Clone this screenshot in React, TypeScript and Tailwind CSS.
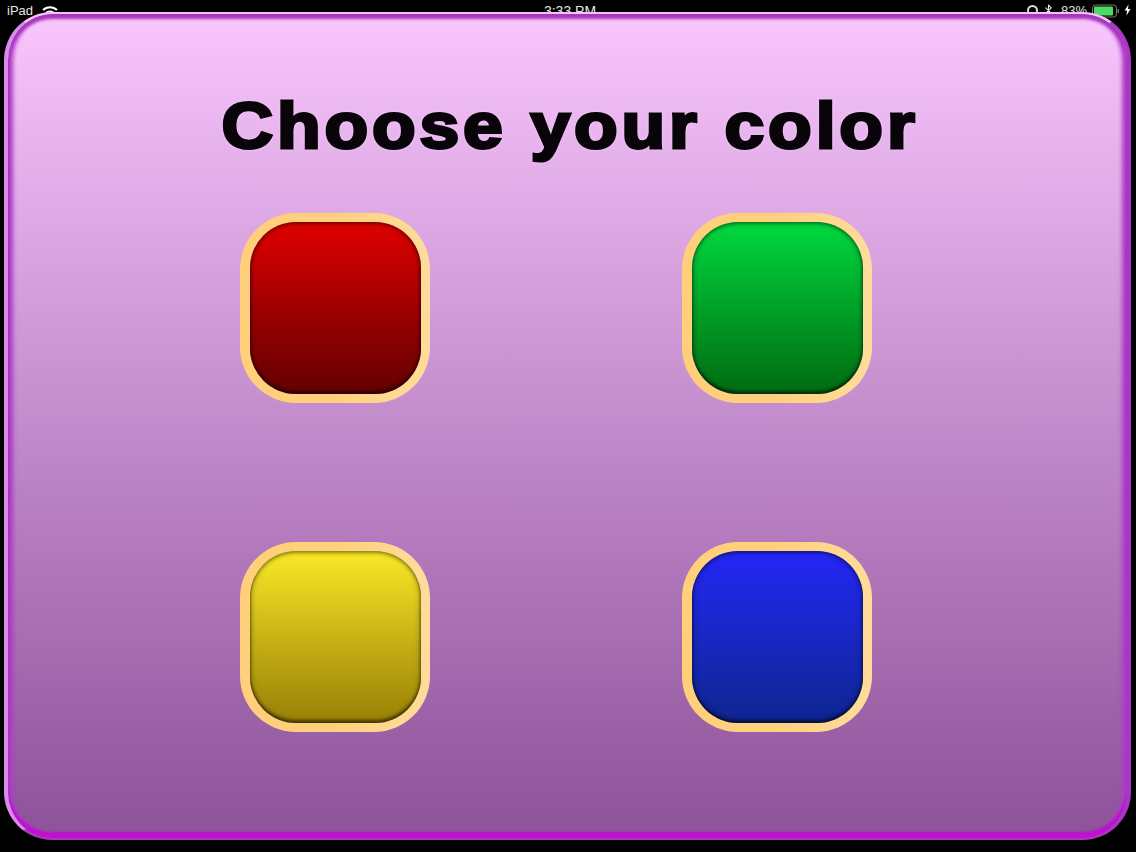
import { Bluetooth } from "lucide-react";

const buttons = [
  { name: "red", face: "bg-gradient-to-b from-[#e00000] to-[#640000]" },
  { name: "green", face: "bg-gradient-to-b from-[#00da3e] to-[#006c12]" },
  { name: "yellow", face: "bg-gradient-to-b from-[#fae926] to-[#988006]" },
  { name: "blue", face: "bg-gradient-to-b from-[#2426f6] to-[#0e2490]" },
];

const WifiIcon = () => (
  <svg width="16" height="10" viewBox="0 0 16 10" className="ml-[9px] mt-[1px]">
    <path d="M1 5 A10 10 0 0 1 15 5" fill="none" stroke="white" strokeWidth="2" />
    <path d="M4 8 A6 6 0 0 1 12 8" fill="none" stroke="white" strokeWidth="2" />
  </svg>
);

const BatteryIcon = () => (
  <svg width="28" height="14" viewBox="0 0 28 14">
    <rect x="0.5" y="1" width="24" height="12" rx="3" fill="none" stroke="#777" />
    <rect x="2" y="2.5" width="19" height="9" rx="1" fill="#4cd964" />
    <rect x="25.5" y="5" width="1.5" height="4" fill="#777" />
  </svg>
);

const BoltIcon = () => (
  <svg width="7" height="12" viewBox="0 0 7 11">
    <path d="M4.5 0 L0.5 6 H3 L2.5 11 L6.5 4.5 H4 Z" fill="white" />
  </svg>
);

const StatusBar = () => (
  <div className="flex h-3 items-start justify-between pl-[7px] pr-[5px] pt-[4px] text-[13px] leading-[14px] text-[#e6e6e6]">
    <div className="flex w-[200px] items-start">
      <span>iPad</span>
      <WifiIcon />
    </div>
    <span className="ml-[2px] text-[14px]">3:33 PM</span>
    <div className="flex w-[200px] items-start justify-end">
      <span className="mt-[1px] h-[11px] w-[11px] rounded-full border-2 border-[#ddd]" />
      <Bluetooth size={13} strokeWidth={2} className="ml-[4px] text-[#e6e6e6]" />
      <span className="ml-[6px]">83%</span>
      <span className="ml-[5px]"><BatteryIcon /></span>
      <span className="ml-[4px]"><BoltIcon /></span>
    </div>
  </div>
);

export default function App() {
  return (
    <div className="h-[852px] w-[1136px] overflow-hidden bg-black font-['Liberation_Sans',Arial,sans-serif]">
      <StatusBar />
      <div className="relative ml-[4px] mr-[5px] h-[828px] rounded-[48px] border-x-[4px] border-y-2 border-b-[#a83ab8] border-l-[#d68ee6] border-r-[#a638c4] border-t-[#f2c4f6] bg-gradient-to-b from-[#f9c6fd] to-[#8d529a] shadow-[inset_0_5px_3px_#a836bc,inset_0_-6px_2px_#c010d2,inset_5px_0_4px_#ae3cc8,inset_-5px_0_4px_#ae3cc8]">
        <h1 className="ml-[5px] origin-center scale-x-[1.1] pt-[67px] text-center text-[65px] font-bold leading-[90px] tracking-[3.5px] text-[#08040a] [-webkit-text-stroke:3px_#08040a] [text-shadow:0_0_4px_rgba(255,255,255,0.7)]">
          Choose your color
        </h1>
        <div className="ml-[232px] mt-[42px] grid w-[632px] grid-cols-[190px_190px] justify-between gap-y-[139px]">
          {buttons.map((b) => (
            <div key={b.name} className="rounded-[56px] bg-gradient-to-r from-[#ffcf7c] via-[#ffd07c] to-[#ffdc9c] py-[9px] pl-[10px] pr-[9px]">
              <div className={`h-[172px] rounded-[46px] ${b.face} shadow-[inset_0_0_6px_rgba(0,0,0,0.45),inset_0_-3px_3px_rgba(0,0,0,0.45),inset_0_2px_3px_rgba(0,0,0,0.25)]`} />
            </div>
          ))}
        </div>
      </div>
    </div>
  );
}
